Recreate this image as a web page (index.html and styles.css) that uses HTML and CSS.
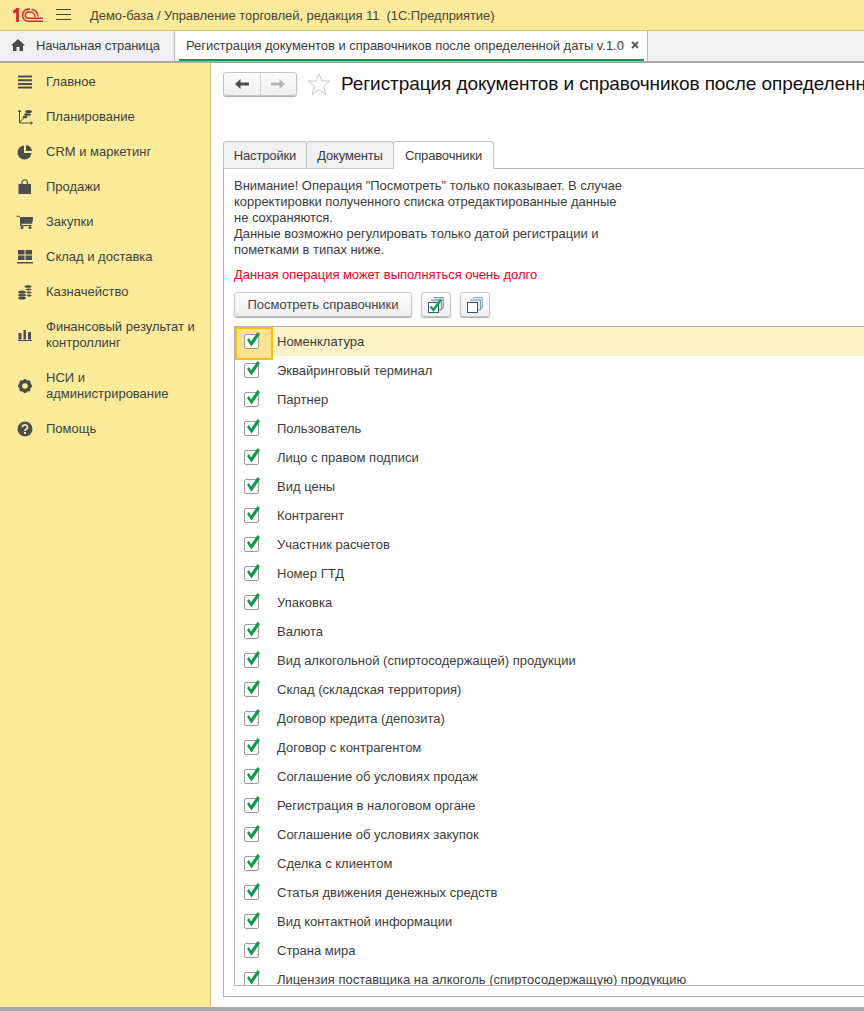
FILE: index.html
```html
<!DOCTYPE html>
<html lang="ru">
<head>
<meta charset="utf-8">
<title>Демо-база</title>
<link rel="stylesheet" href="styles.css">
</head>
<body>
<div class="app">
  <header class="topbar">
    <svg class="logo" width="30" height="15" viewBox="0 0 30 15"><g fill="none" stroke="#d9232e"><path d="M0 4.500L4.500 1.200V14" stroke-width="2.800"/><path d="M30 13.200H15.500A6 6 0 0 1 15.500 1.100H17" stroke-width="1.500"/><path d="M30 10.300H15.500A3 3 0 0 1 15.500 4.100H17A5 5 0 0 1 22 9" stroke-width="1.500"/><path d="M18.500 1.300A8 8 0 0 1 25 8.500" stroke-width="1.500"/></g></svg>
    <svg class="burger" width="15" height="12" viewBox="0 0 15 12"><path d="M0 .5H15M0 5.500H15M0 10.500H15" stroke="#4a4534" fill="none"/></svg>
    <span class="apptitle">Демо-база / Управление торговлей, редакция 11  (1С:Предприятие)</span>
  </header>
  <nav class="tabbar">
    <div class="hometab">
      <svg width="14" height="12" viewBox="0 0 14 12"><path d="M7 0L14 6.500H12V12H8.500V8H5.500V12H2V6.500H0Z" fill="#4a4a4a"/></svg>
      <span>Начальная страница</span>
    </div>
    <div class="doctab">
      <span>Регистрация документов и справочников после определенной даты v.1.0</span>
      <svg class="close" width="8" height="8" viewBox="0 0 8 8"><path d="M1 1L7 7M7 1L1 7" stroke="#555" stroke-width="1.800" fill="none"/></svg>
    </div>
  </nav>
  <div class="body">
    <aside class="sidebar">
      <a class="navitem"><svg width="16" height="14" viewBox="0 0 16 14"><path d="M1 1.500H15M1 5.200H15M1 8.900H15M1 12.600H15" stroke="#4d4d4d" stroke-width="2" fill="none"/></svg><span>Главное</span></a>
      <a class="navitem"><svg width="16" height="16" viewBox="0 0 16 16"><path d="M2.500 1V14H15.500M1 3L2.500 1 4 3M13.500 12.500L15.500 14 13.500 15.500M3 13L7 8.500" stroke="#4d4d4d" fill="none"/><ellipse cx="11.500" cy="2.500" rx="3.500" ry="1.500" fill="#4d4d4d"/><ellipse cx="10.500" cy="5.500" rx="3.500" ry="1.300" fill="#4d4d4d"/><ellipse cx="8" cy="8" rx="2.500" ry="1.200" fill="#4d4d4d"/></svg><span>Планирование</span></a>
      <a class="navitem"><svg width="16" height="16" viewBox="0 0 16 16"><path d="M7 1.500V9H14.500A7 7 0 1 1 7 1.500Z" fill="#4d4d4d"/><path d="M9 1V7H15A6.500 6.500 0 0 0 9 1Z" fill="#4d4d4d"/></svg><span>CRM и маркетинг</span></a>
      <a class="navitem"><svg width="16" height="16" viewBox="0 0 16 16"><path d="M1.500 5H14V15H1.500Z" fill="#4d4d4d"/><path d="M5 7V3.500A2.700 2.700 0 0 1 10.500 3.500V7" stroke="#4d4d4d" stroke-width="1.200" fill="none"/></svg><span>Продажи</span></a>
      <a class="navitem"><svg width="17" height="14" viewBox="0 0 17 14"><path d="M0 .8H3L3.500 2H16.500L15.500 8.500H5V10H15V11H3.500V2.500L2.500 1.800H0Z" fill="#4d4d4d"/><path d="M4 2H16.500L15.500 8.500H4Z" fill="#4d4d4d"/><circle cx="5.500" cy="12.500" r="1.500" fill="#4d4d4d"/><circle cx="13.500" cy="12.500" r="1.500" fill="#4d4d4d"/></svg><span>Закупки</span></a>
      <a class="navitem"><svg width="16" height="14" viewBox="0 0 16 14"><path d="M1 0H7.500V4.500H1ZM8.500 0H15V4.500H8.500ZM1 5.500H7.500V10H1ZM8.500 5.500H15V10H8.500ZM0 12H16V13.500H0Z" fill="#4d4d4d"/></svg><span>Склад и доставка</span></a>
      <a class="navitem"><svg width="16" height="16" viewBox="0 0 16 16"><g fill="#4d4d4d"><ellipse cx="5" cy="8" rx="3.800" ry="1.500"/><ellipse cx="5" cy="11" rx="3.800" ry="1.500"/><ellipse cx="5" cy="14" rx="3.800" ry="1.500"/><ellipse cx="11" cy="2.500" rx="3.500" ry="1.300"/><ellipse cx="11.500" cy="5.500" rx="3" ry="1.100"/><ellipse cx="12" cy="8.500" rx="2.700" ry="1"/><ellipse cx="12" cy="11.500" rx="2.700" ry="1"/></g></svg><span>Казначейство</span></a>
      <a class="navitem tall"><svg width="16" height="12" viewBox="0 0 16 12"><path d="M1.500 4H4.500V10.500H1.500ZM6.500 1H9V10.500H6.500ZM11 3H14V10.500H11ZM1 11H15V12H1Z" fill="#4d4d4d"/></svg><span>Финансовый результат и контроллинг</span></a>
      <a class="navitem tall"><svg width="16" height="16" viewBox="0 0 16 16"><circle cx="8" cy="8" r="4.500" fill="none" stroke="#4d4d4d" stroke-width="3.400"/><path d="M8 1V15M1 8H15M3 3L13 13M13 3L3 13" stroke="#4d4d4d" stroke-width="2.600" fill="none" stroke-dasharray="3 8"/></svg><span>НСИ и администрирование</span></a>
      <a class="navitem"><svg width="16" height="16" viewBox="0 0 16 16"><circle cx="8" cy="8" r="7.500" fill="#4d4d4d"/><path d="M5.500 6.200A2.500 2.300 0 1 1 9 8.200C8.300 8.600 8 9 8 10" stroke="#fbeb9b" stroke-width="1.700" fill="none"/><rect x="7" y="11" width="2" height="2" fill="#fbeb9b"/></svg><span>Помощь</span></a>
    </aside>
    <main class="workspace">
      <div class="formhead">
        <div class="navgroup">
          <span class="navbtn"><svg width="14" height="10" viewBox="0 0 14 10"><path d="M0 5L5.500 0V3.500H14V6.500H5.500V10Z" fill="#4d4d4d"/></svg></span>
          <span class="navbtn"><svg width="14" height="10" viewBox="0 0 14 10"><path d="M14 5L8.500 0V3.500H0V6.500H8.500V10Z" fill="#b5b5b5"/></svg></span>
        </div>
        <svg class="star" width="24" height="24" viewBox="0 0 24 24"><path d="M12 1.500L15 9H23L16.500 14L19 22.500L12 17.500L5 22.500L7.500 14L1 9H9Z" fill="#fff" stroke="#c9c9c9"/></svg>
        <h1 class="formtitle">Регистрация документов и справочников после определенной даты v.1.0</h1>
      </div>
      <div class="tabs">
        <span class="tab tab-settings">Настройки</span>
        <span class="tab tab-docs">Документы</span>
        <span class="tab tab-refs active">Справочники</span>
      </div>
      <section class="panel">
        <p class="notice">Внимание! Операция "Посмотреть" только показывает. В случае<br>корректировки полученного списка отредактированные данные<br>не сохраняются.<br>Данные возможно регулировать только датой регистрации и<br>пометками в типах ниже.</p>
        <p class="warning">Данная операция может выполняться очень долго</p>
        <div class="actions">
          <button class="btn wide">Посмотреть справочники</button>
          <button class="btn square"><svg width="18" height="18" viewBox="0 0 18 18"><path d="M6.500 1.500H16.500V12H14" fill="#cfe3ea" stroke="#7f9aa5"/><path d="M4 4H14.500V14H12" fill="#dbe9ee" stroke="#6d8a96"/><rect x="1.500" y="6.500" width="10" height="10" fill="#fff" stroke="#33586a"/><path d="M3.500 10.500L6.500 14L14 3.500" stroke="#12a050" stroke-width="2.400" fill="none"/></svg></button>
          <button class="btn square"><svg width="18" height="18" viewBox="0 0 18 18"><path d="M6.500 1.500H16.500V12H14" fill="#dbe6ea" stroke="#9ab0ba"/><path d="M4 4H14.500V14H12" fill="#e6eef1" stroke="#7f9aa5"/><rect x="1.500" y="6.500" width="10" height="10" fill="#fff" stroke="#33586a"/></svg></button>
        </div>
        <div class="list">
          <div class="row current"><span class="check"></span><span>Номенклатура</span></div>
          <div class="row"><span class="check"></span><span>Эквайринговый терминал</span></div>
          <div class="row"><span class="check"></span><span>Партнер</span></div>
          <div class="row"><span class="check"></span><span>Пользователь</span></div>
          <div class="row"><span class="check"></span><span>Лицо с правом подписи</span></div>
          <div class="row"><span class="check"></span><span>Вид цены</span></div>
          <div class="row"><span class="check"></span><span>Контрагент</span></div>
          <div class="row"><span class="check"></span><span>Участник расчетов</span></div>
          <div class="row"><span class="check"></span><span>Номер ГТД</span></div>
          <div class="row"><span class="check"></span><span>Упаковка</span></div>
          <div class="row"><span class="check"></span><span>Валюта</span></div>
          <div class="row"><span class="check"></span><span>Вид алкогольной (спиртосодержащей) продукции</span></div>
          <div class="row"><span class="check"></span><span>Склад (складская территория)</span></div>
          <div class="row"><span class="check"></span><span>Договор кредита (депозита)</span></div>
          <div class="row"><span class="check"></span><span>Договор с контрагентом</span></div>
          <div class="row"><span class="check"></span><span>Соглашение об условиях продаж</span></div>
          <div class="row"><span class="check"></span><span>Регистрация в налоговом органе</span></div>
          <div class="row"><span class="check"></span><span>Соглашение об условиях закупок</span></div>
          <div class="row"><span class="check"></span><span>Сделка с клиентом</span></div>
          <div class="row"><span class="check"></span><span>Статья движения денежных средств</span></div>
          <div class="row"><span class="check"></span><span>Вид контактной информации</span></div>
          <div class="row"><span class="check"></span><span>Страна мира</span></div>
          <div class="row"><span class="check"></span><span>Лицензия поставщика на алкоголь (спиртосодержащую) продукцию</span></div>
        </div>
      </section>
    </main>
  </div>
  <div class="statusline"></div>
</div>
</body>
</html>
```

FILE: styles.css
```css
* { box-sizing: border-box; }
html, body { margin: 0; height: 100%; overflow: hidden; }
body { font-family: "Liberation Sans", Arial, sans-serif; font-size: 13px; color: #3c3c3c; background: #fff; }
.app { width: 864px; height: 1011px; display: flex; flex-direction: column; overflow: hidden; }

.topbar { height: 31px; flex: none; display: flex; align-items: center; background: #fbe99c; border-bottom: 1px solid #d5c26e; padding-left: 13px; }
.logo { flex: none; }
.burger { flex: none; margin-left: 13px; }
.apptitle { margin-left: 19px; white-space: pre; color: #4a4534; letter-spacing: -.06px; }

.tabbar { height: 32px; flex: none; display: flex; background: #f0f0f0; border-bottom: 2px solid #aaa; }
.hometab { width: 175px; display: flex; align-items: center; gap: 11px; padding-left: 11px; border-right: 1px solid #b8b8b8; padding-bottom: 2px; letter-spacing: -.1px; }
.doctab { width: 473px; display: flex; align-items: center; gap: 7px; background: #fff; border-right: 1px solid #b8b8b8; padding: 0 0 2px 11px; position: relative; white-space: nowrap; letter-spacing: -.045px; }
.doctab::after { content: ""; position: absolute; left: 4px; right: 3px; bottom: 0; height: 2px; background: #0a9a50; }

.body { flex: 1; display: flex; min-height: 0; }
.sidebar { width: 211px; flex: none; background: #fbeb9b; border-right: 1px solid #cdbd6b; }
.navitem { display: flex; align-items: center; height: 35px; padding: 2px 0 0 16px; position: relative; color: #3f3f3f; }
.navitem svg { flex: none; width: 18px; margin-right: 12px; }
.navitem.tall { height: 51px; line-height: 16px; }
.navitem.tall span { width: 155px; }

.workspace { flex: 1; min-width: 0; overflow: hidden; padding: 9px 0 0 12px; display: flex; flex-direction: column; }
.formhead { height: 69px; flex: none; display: flex; align-items: flex-start; overflow: hidden; }
.navgroup { display: flex; width: 74px; height: 24px; border: 1px solid #c4c4c4; border-radius: 3px; background: linear-gradient(#fdfdfd, #efefef); box-shadow: 0 1px 1px #aaa; flex: none; }
.navbtn { flex: 1; display: flex; align-items: center; justify-content: center; }
.navbtn + .navbtn { border-left: 1px solid #d4d4d4; }
.star { flex: none; margin: 0 0 0 10px; }
.formtitle { margin: 0 0 0 10px; font-size: 19px; line-height: 23px; letter-spacing: -.08px; font-weight: 400; color: #111; white-space: nowrap; flex: none; }

.tabs { height: 28px; flex: none; display: flex; position: relative; z-index: 1; width: 800px; }
.tab { height: 28px; display: flex; align-items: center; justify-content: center; background: #f0f0f0; border: 1px solid #c4c4c4; border-radius: 3px 3px 0 0; margin-right: -1px; letter-spacing: -.15px; }
.tab-settings { width: 84px; }
.tab-docs { width: 88px; }
.tab-refs { width: 101px; }
.tab.active { background: #fff; border-bottom-color: #fff; }

.panel { flex: none; width: 800px; height: 829px; margin-top: -1px; border: 1px solid #b4b4b4; padding: 9px 0 0 10px; }
.notice { margin: 0; line-height: 15.900px; letter-spacing: -.035px; }
.warning { margin: 9.500px 0 0; line-height: 16px; color: #f0002a; letter-spacing: -.04px; }
.actions { display: flex; gap: 9px; margin-top: 9px; height: 25px; }
.btn { height: 25px; padding: 0; border: 1px solid #c8c8c8; border-radius: 3px; background: linear-gradient(#fdfdfd, #efefef); box-shadow: 0 1px 1px #aaa; font: inherit; color: #444; display: flex; align-items: center; justify-content: center; }
.wide { width: 178px; }
.square { width: 30px; }

.list { margin-top: 9px; height: 660px; width: 700px; overflow: hidden; border: 1px solid #b4b4b4; border-right: 0; }
.row { height: 29px; display: flex; align-items: center; padding-left: 9px; gap: 18px; white-space: nowrap; color: #3c3c3c; }
.row.current { background: #fdf2c6; position: relative; }
.check { flex: none; width: 15px; height: 15px; border: 1px solid #9a9a9a; border-radius: 2px; background: #fff; position: relative; }
.check::after { content: ""; position: absolute; left: 2px; top: -3px; width: 13px; height: 15px; background: #0a9a50; clip-path: polygon(0 53%, 15% 40%, 31% 63%, 81% 0, 100% 13%, 35% 97%); }
.row.current::before { content: ""; position: absolute; left: 0; top: 0; width: 34px; height: 29px; background: #fde390; border: 2px solid #f8c000; }
.row.current .check { z-index: 1; }

.statusline { height: 4px; flex: none; background: #a9a9a9; }
```
